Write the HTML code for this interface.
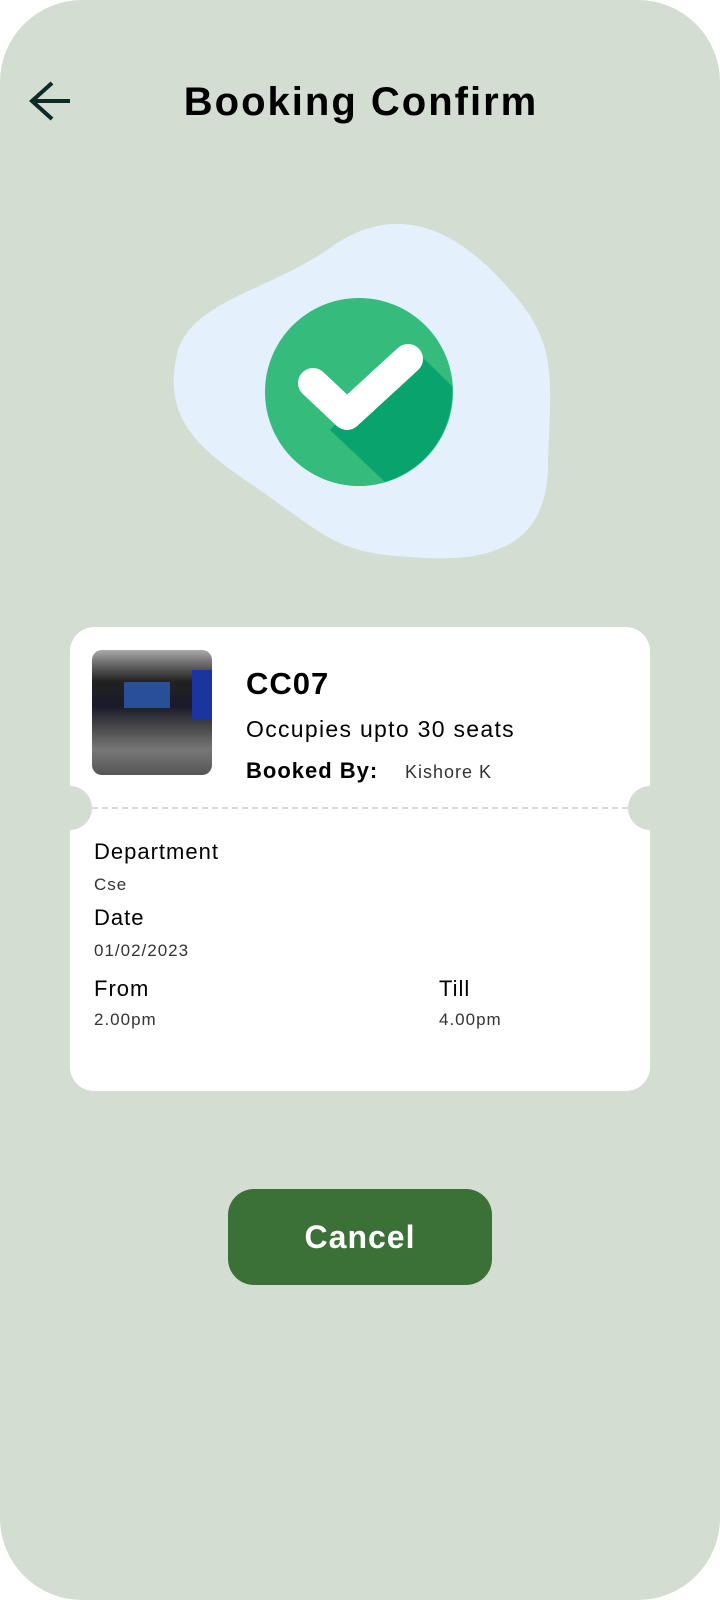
<!DOCTYPE html>
<html><head><meta charset="utf-8"><style>
*{margin:0;padding:0;box-sizing:border-box}
body{width:720px;height:1600px;background:#fff;font-family:"Liberation Sans",sans-serif;overflow:hidden}
.ph{position:absolute;left:0;top:0;width:720px;height:1600px;background:#d3ddd1;border-radius:82px}
.t{position:absolute;color:#000;letter-spacing:1px}
</style></head><body>
<div class="ph"></div>
<svg style="position:absolute;left:28px;top:78px" width="46" height="46" viewBox="0 0 46 46"><path d="M24 5 L4 23 L24 41 M4 23 H42" stroke="#0d2a26" stroke-width="4" fill="none"/></svg>
<div class="t" style="left:0;width:720px;text-align:center;top:80px;font-size:40px;font-weight:bold;letter-spacing:2px;padding-left:2px">Booking Confirm</div>
<svg style="position:absolute;left:0;top:0" width="720" height="600">
<path d="M330 248 C390 205 450 220 510 290 C560 345 550 380 548 470 C545 540 500 565 410 557 C340 553 330 540 260 490 C200 450 160 420 178 350 C195 300 270 290 330 248Z" fill="#e4f0fb"/>
<circle cx="359" cy="392" r="94" fill="#35bc7d"/>
<path d="M415 350 L452 386 A94 94 0 0 1 385 482 L330 430 Z" fill="#09a46e"/>
<path d="M313 383 L347 415 L408 359" stroke="#fff" stroke-width="30" stroke-linecap="round" stroke-linejoin="round" fill="none"/>
</svg>
<div style="position:absolute;left:70px;top:627px;width:580px;height:464px;background:#fff;border-radius:24px"></div>
<div style="position:absolute;left:48px;top:786px;width:44px;height:44px;border-radius:50%;background:#d3ddd1"></div>
<div style="position:absolute;left:628px;top:786px;width:44px;height:44px;border-radius:50%;background:#d3ddd1"></div>
<div style="position:absolute;left:92px;top:807px;width:536px;border-top:2px dashed #d3ddd1"></div>
<div style="position:absolute;left:92px;top:650px;width:120px;height:125px;border-radius:10px;background:linear-gradient(#aaa 0,#666 12%,#222 25%,#1a1a2a 45%,#444 60%,#777 80%,#555 100%);overflow:hidden">
<div style="position:absolute;left:32px;top:32px;width:46px;height:26px;background:#2a4f9a"></div>
<div style="position:absolute;left:100px;top:20px;width:20px;height:50px;background:#1b35a0"></div></div>
<div class="t" style="left:246px;top:666px;font-size:31px;font-weight:bold">CC07</div>
<div class="t" style="left:246px;top:716px;font-size:23px;letter-spacing:1.3px">Occupies upto 30 seats</div>
<div class="t" style="left:246px;top:758px;font-size:22px;font-weight:bold">Booked By:</div>
<div class="t" style="left:405px;top:762px;font-size:18px;color:#333">Kishore K</div>
<div class="t" style="left:94px;top:839px;font-size:22px">Department</div>
<div class="t" style="left:94px;top:875px;font-size:17px;color:#333">Cse</div>
<div class="t" style="left:94px;top:905px;font-size:22px">Date</div>
<div class="t" style="left:94px;top:941px;font-size:17px;color:#333">01/02/2023</div>
<div class="t" style="left:94px;top:976px;font-size:22px">From</div>
<div class="t" style="left:94px;top:1010px;font-size:17px;color:#333">2.00pm</div>
<div class="t" style="left:439px;top:976px;font-size:22px">Till</div>
<div class="t" style="left:439px;top:1010px;font-size:17px;color:#333">4.00pm</div>
<div style="position:absolute;left:228px;top:1189px;width:264px;height:96px;border-radius:26px;background:#3b7137;color:#fff;font-size:32px;font-weight:bold;text-align:center;line-height:96px;letter-spacing:1px">Cancel</div>
</body></html>
